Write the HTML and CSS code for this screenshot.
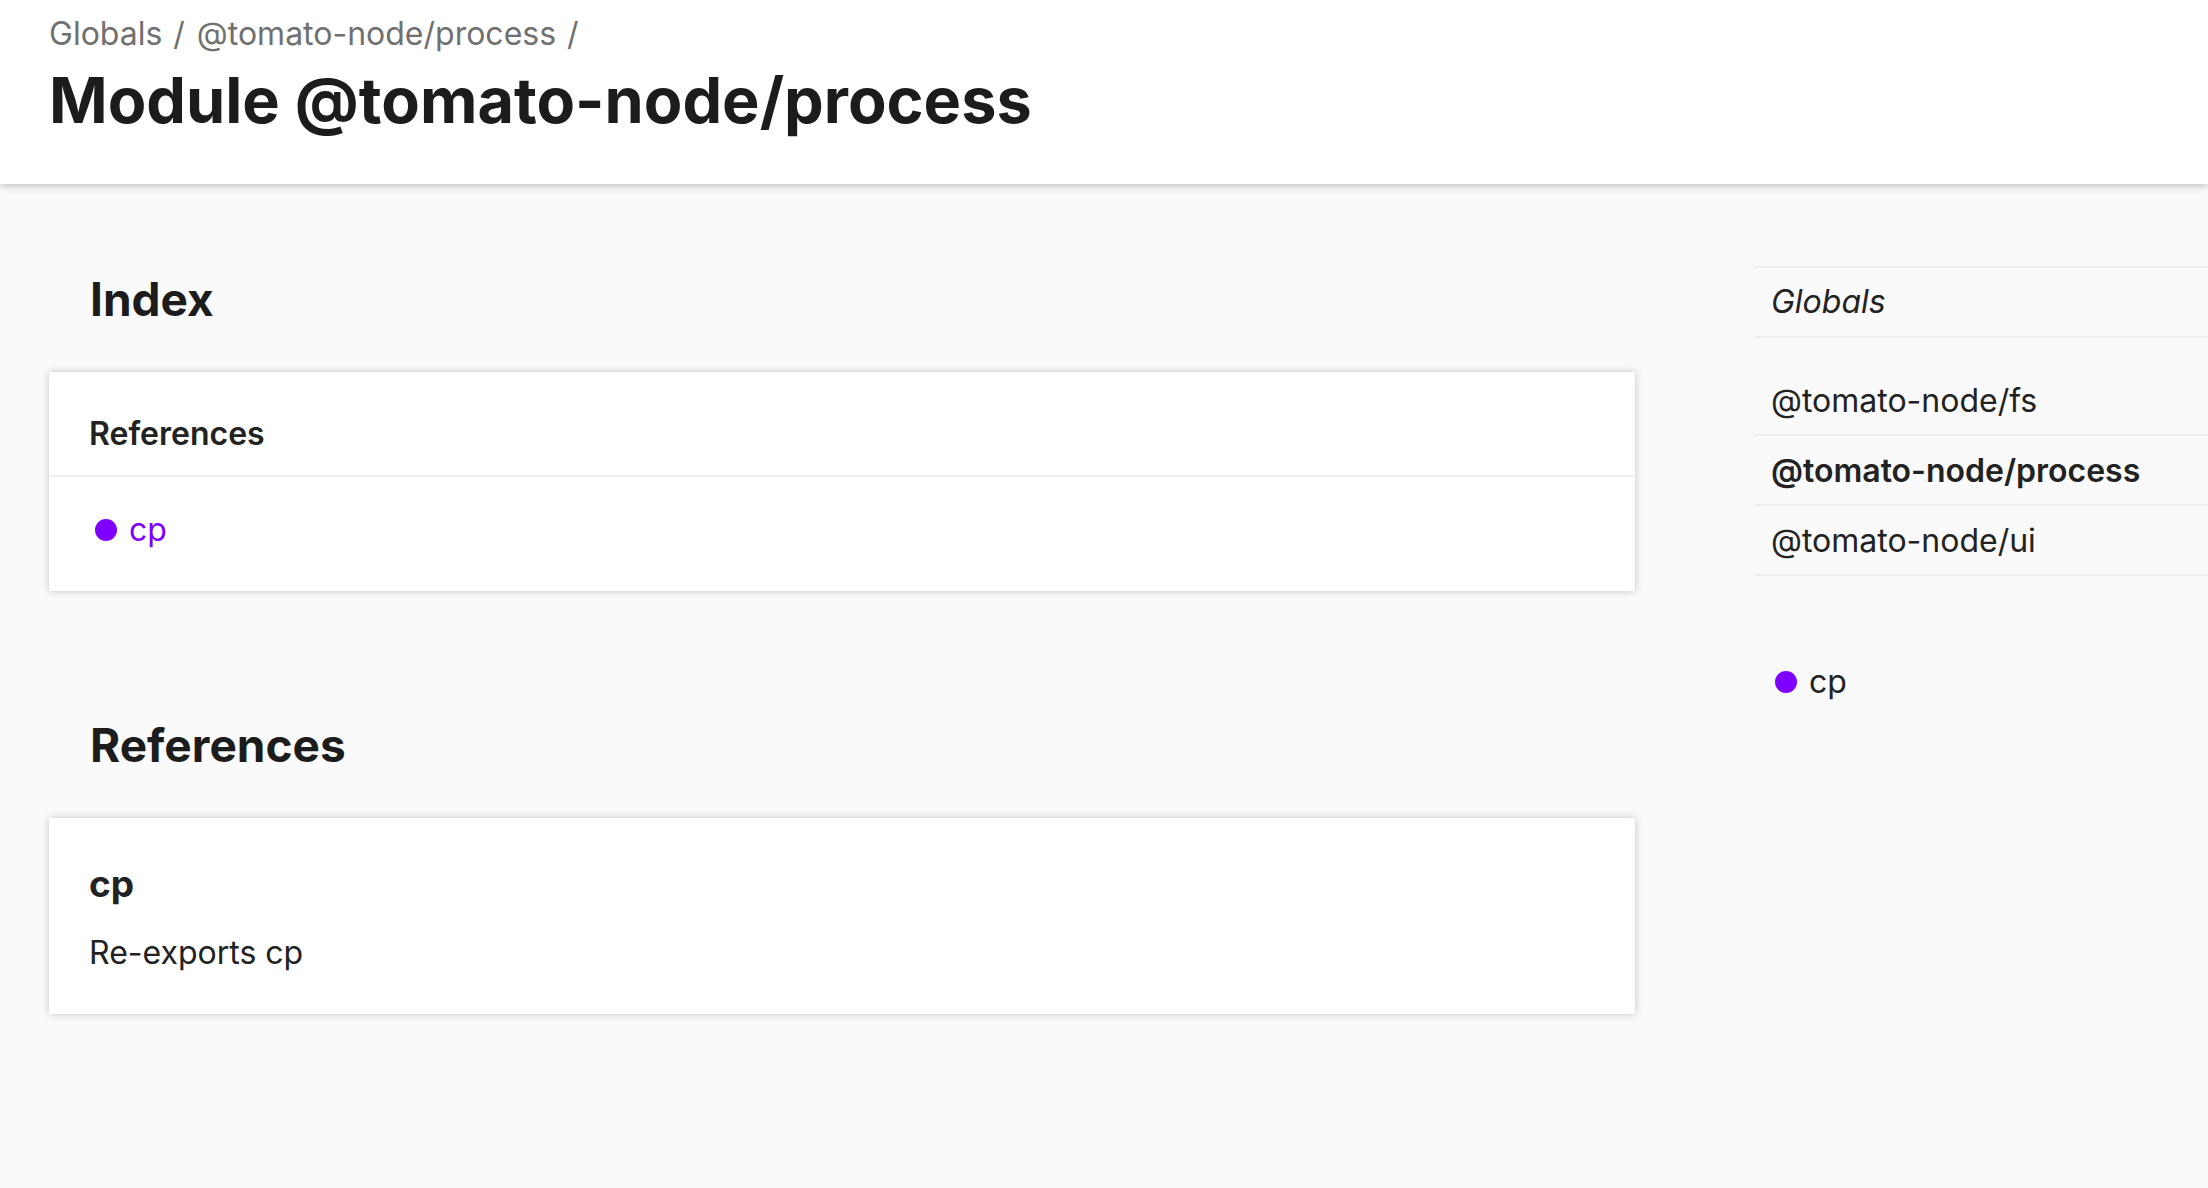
FILE: index.html
```html
<!DOCTYPE html>
<html lang="en">
<head>
<meta charset="utf-8">
<title>@tomato-node/process</title>
<link rel="stylesheet" href="styles.css">
</head>
<body>
<header class="page-title">
  <div class="title-inner">
    <ul class="breadcrumb">
      <li><a href="#">Globals</a><span class="sep">/</span></li>
      <li><a href="#">@tomato-node/process</a><span class="sep">/</span></li>
    </ul>
    <h1>Module @tomato-node/process</h1>
  </div>
</header>
<div class="layout">
  <main class="content">
    <section class="group group-index">
      <h2>Index</h2>
      <div class="panel index-panel">
        <h3>References</h3>
        <ul class="index-list">
          <li><a class="kind" href="#cp"><span class="dot"></span>cp</a></li>
        </ul>
      </div>
    </section>
    <section class="group group-refs">
      <h2>References</h2>
      <div class="panel member" id="cp">
        <h3>cp</h3>
        <p>Re-exports cp</p>
      </div>
    </section>
  </main>
  <aside class="menu">
    <nav class="nav-primary">
      <ul>
        <li class="globals"><a href="#"><em>Globals</em></a></li>
        <li class="after-globals"><a href="#">@tomato-node/fs</a></li>
        <li class="current"><a href="#">@tomato-node/process</a></li>
        <li><a href="#">@tomato-node/ui</a></li>
      </ul>
    </nav>
    <nav class="nav-secondary">
      <ul>
        <li><a class="kind" href="#cp"><span class="dot"></span>cp</a></li>
      </ul>
    </nav>
  </aside>
</div>
</body>
</html>
```

FILE: styles.css
```css
html, body {
  margin: 0;
  padding: 0;
}

body {
  background: #fafafa;
  color: #222;
  font-family: Inter, "Liberation Sans", sans-serif;
  font-size: 32px;
  line-height: 43px;
  min-height: 1188px;
}

a {
  text-decoration: none;
  color: inherit;
}

ul {
  list-style: none;
  margin: 0;
  padding: 0;
}

/* header */
.page-title {
  background: #fff;
  box-shadow: 0 0 10px rgba(0, 0, 0, 0.35);
  position: relative;
  z-index: 1;
}

.title-inner {
  padding: 12px 49px 45px;
}

.breadcrumb {
  display: flex;
  color: #707070;
  font-size: 32px;
  line-height: 43px;
}

.breadcrumb li {
  display: flex;
}

.breadcrumb .sep {
  margin: 0 12px 0 11px;
}

.page-title h1 {
  margin: 7px 0 0;
  font-size: 63px;
  line-height: 77px;
  font-weight: 700;
  color: #1c1c1c;
}

/* layout */
.layout {
  display: grid;
  grid-template-columns: 1586px 1fr;
  column-gap: 119px;
  padding-left: 49px;
}

.group h2 {
  margin: 0 0 44px;
  padding-left: 41px;
  font-size: 46px;
  line-height: 58px;
  font-weight: 700;
  color: #1c1c1c;
}

.group-index {
  margin-top: 86px;
}

.group-refs {
  margin-top: 125px;
}

.panel {
  background: #fff;
  padding: 40px;
  box-shadow: 0 0 8px rgba(0, 0, 0, 0.22);
}

.index-panel h3 {
  margin: 0 -40px 31px;
  padding: 0 40px 20px;
  border-bottom: 2px solid #eee;
  font-size: 32px;
  line-height: 43px;
  font-weight: 600;
}

.kind {
  display: flex;
  align-items: center;
}

.dot {
  width: 22px;
  height: 22px;
  border-radius: 50%;
  background: #8000ff;
  margin: 0 12px 0 6px;
  flex: none;
}

.index-list .kind {
  color: #8000ff;
}

.member h3 {
  margin: 0 0 21px;
  font-size: 37px;
  line-height: 52px;
  font-weight: 700;
}

.member p {
  margin: 0;
  font-size: 32px;
  line-height: 43px;
}

/* sidebar */
.nav-primary {
  margin-top: 82px;
}

.nav-primary ul {
  border-bottom: 2px solid #eee;
}

.nav-primary li {
  border-top: 2px solid #eee;
}

.nav-primary li a {
  display: block;
  padding: 15px 17px 13px;
  line-height: 40px;
  color: #222;
}

.nav-primary li.globals a {
  padding: 14px 17px;
}

.nav-primary li.after-globals a {
  padding-top: 43px;
}

.nav-primary li.current a {
  font-weight: 600;
}

.nav-secondary {
  margin-top: 84px;
}

.nav-secondary .kind {
  padding-left: 15px;
  color: #222;
}
```
